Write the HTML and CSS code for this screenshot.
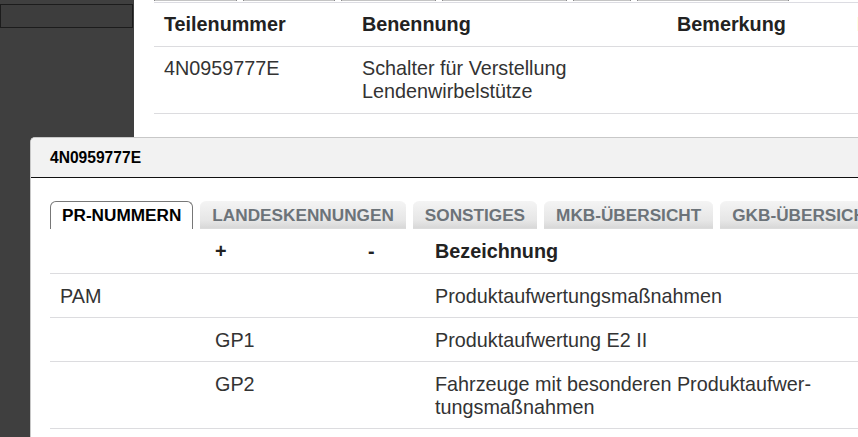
FILE: index.html
```html
<!DOCTYPE html>
<html lang="de">
<head>
<meta charset="utf-8">
<title>Teile</title>
<link rel="stylesheet" href="styles.css">
</head>
<body>
<div class="page">
  <aside class="sidebar">
    <div class="sidebar-box"></div>
  </aside>
  <main class="main">
    <div class="toolbar">
      <span class="tb-btn w83"></span>
      <span class="tb-btn w92"></span>
      <span class="tb-btn w95"></span>
      <span class="tb-btn w125"></span>
      <span class="tb-btn w58"></span>
      <span class="tb-btn w152"></span>
    </div>
    <table class="parts">
      <colgroup>
        <col class="c-teil"><col class="c-ben"><col class="c-bem"><col class="c-rest">
      </colgroup>
      <thead>
        <tr><th>Teilenummer</th><th>Benennung</th><th>Bemerkung</th><th>Menge</th></tr>
      </thead>
      <tbody>
        <tr><td>4N0959777E</td><td>Schalter für Verstellung<br>Lendenwirbelstütze</td><td></td><td>1</td></tr>
      </tbody>
    </table>
  </main>
</div>

<div class="modal">
  <div class="modal-header">4N0959777E</div>
  <div class="modal-body">
    <ul class="tabs">
      <li class="tab active">PR-NUMMERN</li>
      <li class="tab">LANDESKENNUNGEN</li>
      <li class="tab">SONSTIGES</li>
      <li class="tab">MKB-ÜBERSICHT</li>
      <li class="tab">GKB-ÜBERSICHT</li>
    </ul>
    <table class="pr">
      <colgroup>
        <col class="p-fam"><col class="p-plus"><col class="p-minus"><col class="p-bez">
      </colgroup>
      <thead>
        <tr><th></th><th>+</th><th>-</th><th>Bezeichnung</th></tr>
      </thead>
      <tbody>
        <tr><td>PAM</td><td></td><td></td><td>Produktaufwertungsmaßnahmen</td></tr>
        <tr><td></td><td>GP1</td><td></td><td>Produktaufwertung E2 II</td></tr>
        <tr><td></td><td>GP2</td><td></td><td>Fahrzeuge mit besonderen Produktaufwer&shy;tungsmaßnahmen</td></tr>
      </tbody>
    </table>
  </div>
</div>
</body>
</html>
```

FILE: styles.css
```css
* { box-sizing: border-box; }

html, body {
  margin: 0;
  padding: 0;
  width: 858px;
  height: 437px;
  overflow: hidden;
  background: #ffffff;
  font-family: "Liberation Sans", Arial, sans-serif;
}

.page {
  display: flex;
  height: 437px;
}

.sidebar {
  width: 134px;
  flex: 0 0 134px;
  background: #3f3f3f;
  padding-top: 4px;
}

.sidebar-box {
  height: 24px;
  margin-right: 1px;
  border: 1px solid #1c1c1c;
  background: #3d3d3d;
}

.main {
  flex: 1;
  min-width: 0;
  overflow: hidden;
  padding-left: 20px;
}

.toolbar {
  display: flex;
  gap: 6px;
  height: 2px;
  border-bottom: 1px solid #dcdce2;
  width: 900px;
  box-sizing: content-box;
}

.tb-btn {
  height: 1px;
  background: #c4c4c4;
  border-left: 1px solid #8a8a8a;
  border-right: 1px solid #8a8a8a;
}
.w83 { width: 83px; }
.w92 { width: 92px; }
.w95 { width: 95px; }
.w125 { width: 125px; }
.w58 { width: 58px; }
.w152 { width: 152px; }

table {
  border-collapse: collapse;
  table-layout: fixed;
}

.parts {
  width: 900px;
  font-size: 19.8px;
  color: #333;
}

.c-teil { width: 198px; }
.c-ben { width: 315px; }
.c-bem { width: 180px; }
.c-rest { width: 207px; }

.parts th,
.parts td,
.pr th,
.pr td {
  padding: 10px;
  line-height: 23px;
  text-align: left;
  vertical-align: top;
  border-bottom: 1px solid #dcdcdf;
}

.parts th,
.pr th {
  font-weight: bold;
  color: #222;
}

.modal {
  position: absolute;
  left: 30px;
  top: 137px;
  width: 880px;
  height: 320px;
  background: #ffffff;
  border: 1px solid #c8c8c8;
  border-right: none;
  border-radius: 5px 0 0 0;
  overflow: hidden;
}

.modal-header {
  height: 40px;
  background: #f2f2f2;
  border-bottom: 1px solid #111;
  padding-left: 19px;
  display: flex;
  align-items: center;
  font-size: 15.6px;
  font-weight: bold;
  color: #000;
}

.modal-body {
  padding: 23px 0 0 19px;
}

.tabs {
  list-style: none;
  margin: 0;
  padding: 0;
  display: flex;
  gap: 7px;
  height: 28px;
  white-space: nowrap;
}

.tab {
  height: 28px;
  line-height: 28px;
  padding: 0 12px;
  font-size: 17.2px;
  font-weight: bold;
  color: #6c7379;
  border-radius: 6px 6px 0 0;
  background: linear-gradient(#f4f4f4, #e6e6e6 70%, #d6d6d6);
  box-shadow: inset 0 -1px 0 #dcdcdc;
}

.tab.active {
  padding: 0 11px;
  line-height: 27px;
  color: #000;
  background: #ffffff;
  border: 1px solid #777;
  border-bottom: none;
  box-shadow: none;
}

.pr {
  width: 860px;
  margin-top: 1px;
  font-size: 19.8px;
  color: #333;
}

.pr td {
  padding-top: 11px;
  padding-bottom: 9px;
}

.p-fam { width: 155px; }
.p-plus { width: 153px; }
.p-minus { width: 67px; }
.p-bez { width: 485px; }
```
